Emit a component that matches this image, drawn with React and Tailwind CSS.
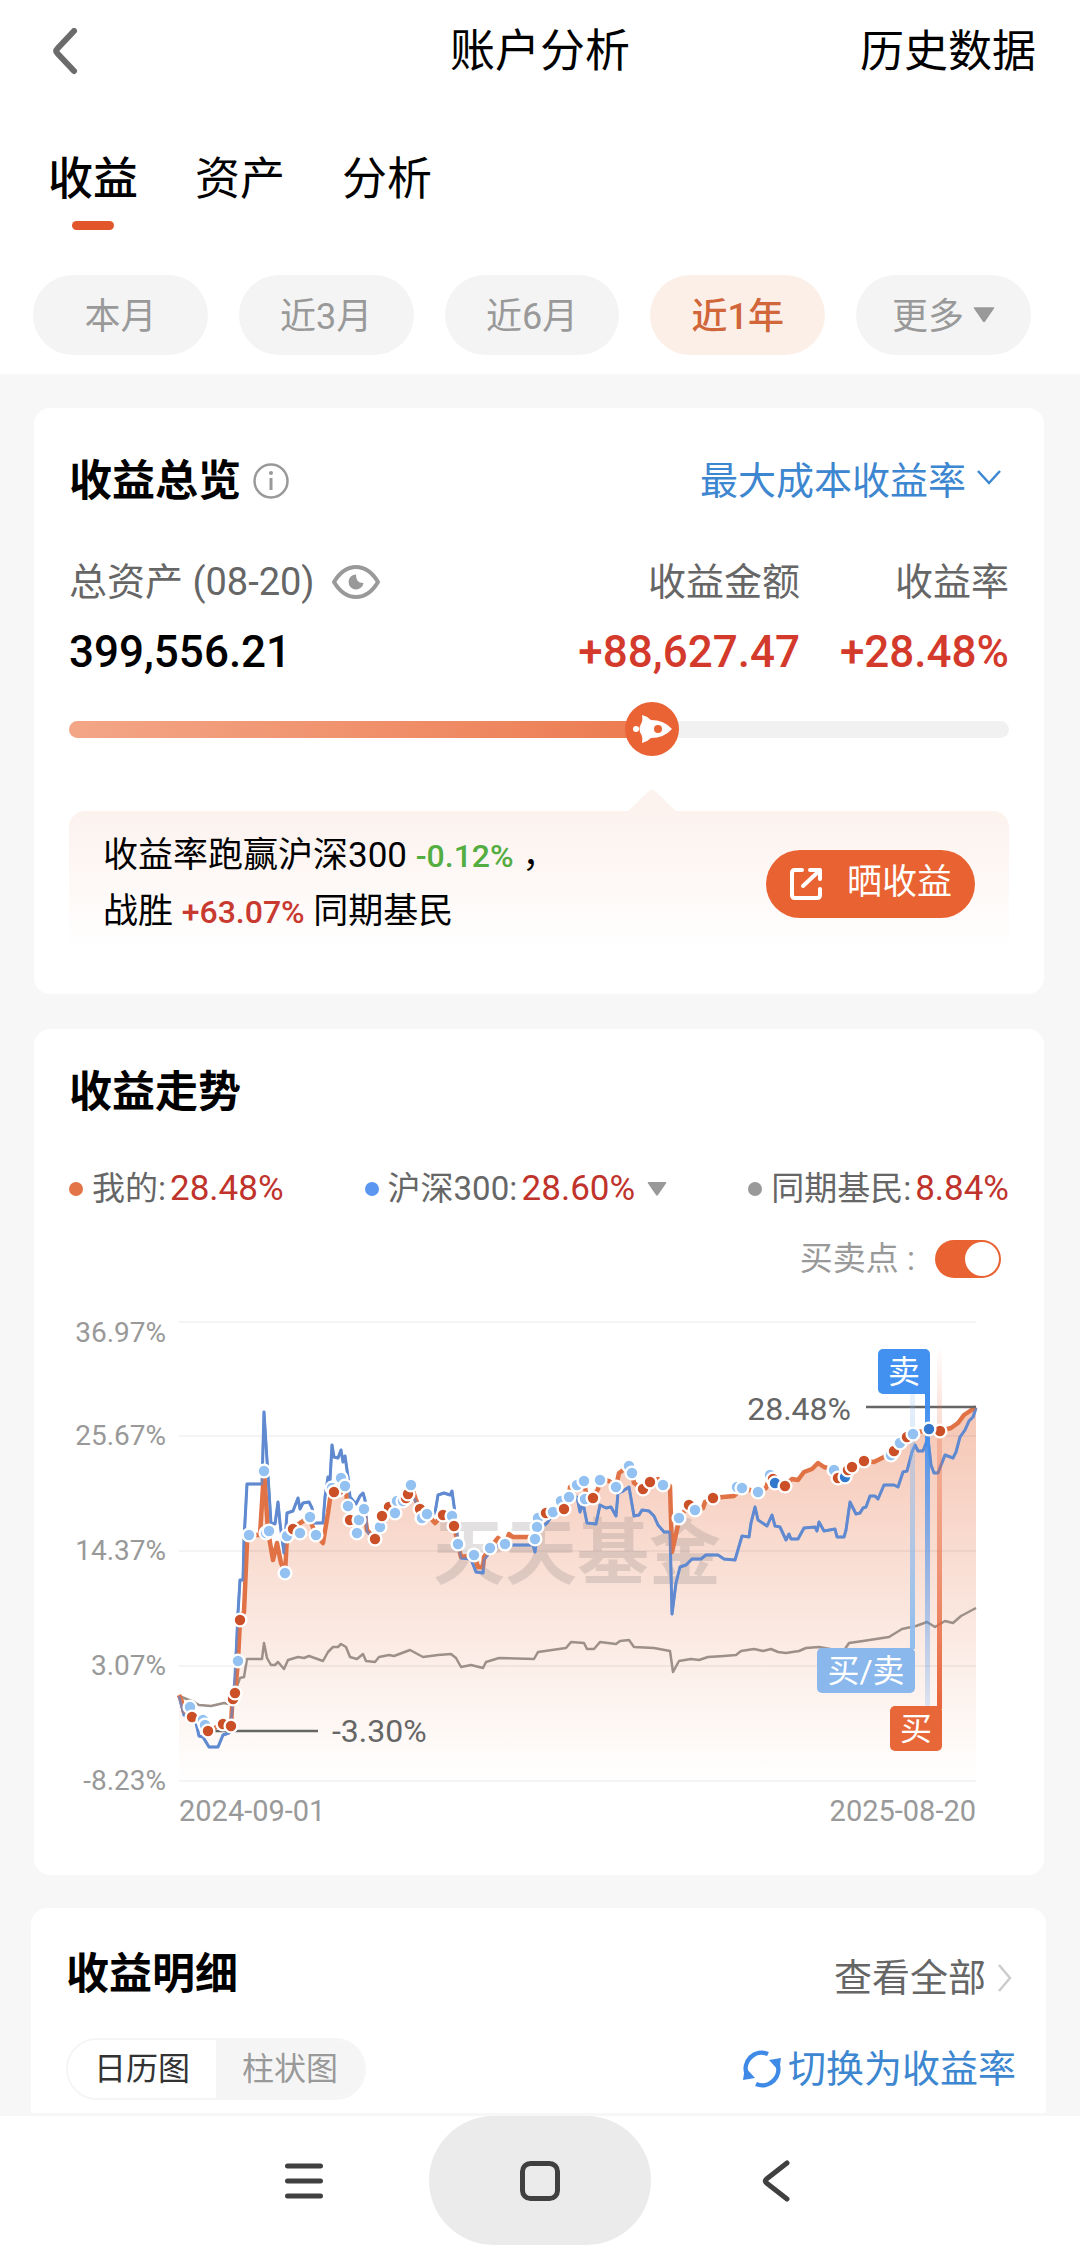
import React, { useState } from 'react';
import clsx from 'clsx';

const TABS = ['收益', '资产', '分析'];
const RANGES = ['本月', '近3月', '近6月', '近1年'];

const MINE =
  '178,1695 181,1702 183,1712 189,1707 191,1717 200,1723 207,1731 222,1724 230,1726 231,1707 234,1693 237,1661 239,1620 243,1612 246,1543 248,1535 259,1535 263,1471 267,1531 272,1560 276,1543 280,1563 284,1573 286,1537 292,1528 299,1523 309,1517 311,1525 315,1535 322,1543 327,1513 330,1492 336,1492 340,1478 344,1486 347,1506 349,1520 356,1533 358,1520 363,1509 366,1530 374,1539 379,1527 381,1516 388,1507 396,1501 405,1497 410,1485 415,1500 419,1509 426,1514 434,1523 442,1515 451,1516 453,1526 457,1544 460,1557 473,1555 477,1567 482,1567 483,1557 489,1548 497,1538 504,1544 508,1534 512,1537 530,1537 534,1539 536,1527 539,1518 545,1513 552,1512 560,1501 568,1497 569,1487 576,1485 583,1481 586,1499 592,1498 597,1489 599,1480 608,1481 615,1487 618,1473 628,1466 631,1473 633,1483 642,1489 649,1482 657,1479 662,1485 669,1486 671,1552 677,1525 678,1518 688,1505 694,1510 702,1508 704,1502 712,1498 722,1497 733,1496 741,1488 757,1492 765,1488 769,1476 774,1483 784,1486 791,1479 797,1480 803,1472 811,1469 817,1463 823,1467 833,1470 837,1478 844,1477 851,1467 863,1461 873,1462 883,1457 893,1451 899,1443 906,1437 912,1434 928,1429 939,1431 950,1428 957,1423 963,1415 969,1411 975,1407';

const INDEX =
  '178,1696 183,1715 195,1723 198,1736 202,1737 208,1747 217,1747 222,1735 228,1733 231,1713 234,1677 237,1613 239,1580 242,1580 243,1540 246,1484 261,1484 263,1412 266,1460 268,1491 270,1523 274,1524 277,1502 279,1523 283,1553 286,1513 292,1511 297,1498 299,1509 302,1503 308,1502 311,1508 313,1523 322,1523 324,1497 327,1477 329,1480 331,1445 333,1457 337,1458 340,1450 342,1462 344,1456 347,1477 349,1497 355,1504 359,1496 362,1493 364,1500 366,1531 374,1541 384,1520 395,1510 410,1492 420,1512 430,1516 434,1513 437,1495 443,1493 449,1495 451,1491 454,1513 457,1544 460,1558 470,1559 475,1572 482,1573 483,1560 488,1553 498,1545 532,1545 534,1552 537,1530 546,1523 553,1513 567,1502 576,1497 579,1512 582,1503 586,1523 595,1524 599,1505 605,1508 610,1507 615,1516 617,1493 622,1491 628,1487 633,1516 638,1515 641,1510 648,1511 653,1516 657,1525 663,1532 669,1532 671,1614 675,1583 679,1567 685,1565 691,1559 700,1559 705,1555 717,1555 723,1559 734,1560 741,1536 748,1537 750,1523 754,1507 757,1520 766,1526 771,1515 774,1526 779,1527 785,1540 788,1534 790,1539 797,1539 803,1528 814,1527 816,1531 818,1522 823,1531 834,1529 836,1537 843,1537 845,1530 849,1502 855,1514 859,1513 862,1508 865,1507 869,1496 874,1496 877,1499 883,1485 893,1485 897,1487 902,1472 906,1471 911,1452 914,1445 917,1451 922,1451 927,1438 930,1465 933,1473 937,1473 944,1455 952,1458 955,1452 959,1437 964,1430 968,1421 972,1417 975,1408';

const PEERS =
  '178,1696 193,1702 198,1705 210,1706 223,1703 228,1704 232,1697 239,1678 243,1677 246,1659 261,1659 263,1643 266,1658 270,1665 274,1665 277,1662 283,1669 287,1660 297,1657 303,1658 308,1656 322,1661 327,1652 332,1647 337,1647 340,1644 345,1647 349,1657 356,1659 362,1654 365,1661 374,1662 378,1657 388,1655 393,1656 409,1650 422,1657 437,1655 450,1654 455,1658 460,1667 470,1665 482,1668 485,1662 498,1658 533,1659 537,1652 565,1648 570,1642 583,1643 586,1649 593,1649 599,1642 615,1644 619,1641 628,1640 633,1647 653,1648 669,1651 672,1672 678,1661 690,1659 698,1660 707,1657 723,1656 735,1655 740,1651 753,1649 762,1651 770,1649 777,1652 785,1653 798,1651 805,1648 818,1647 840,1651 844,1649 848,1643 862,1641 875,1639 888,1637 901,1629 915,1626 926,1622 934,1627 944,1621 952,1623 960,1616 975,1608';

const DOT_COLORS = { s: '#92c1f2', b: '#cb4f27', m: '#3278cf' };

// s = buy and sell on the same day, b = buy, m = sell
const DOTS = [
  ['s', 189, 1707], ['b', 191, 1717], ['s', 202, 1720], ['s', 204, 1725], ['b', 207, 1731], ['b', 222, 1724],
  ['b', 230, 1726], ['b', 232, 1699], ['b', 234, 1693], ['s', 237, 1661], ['b', 239, 1620], ['s', 248, 1535],
  ['s', 263, 1471], ['s', 265, 1533], ['s', 268, 1531], ['s', 284, 1573], ['s', 286, 1536], ['b', 292, 1529],
  ['s', 299, 1533], ['s', 309, 1517], ['s', 315, 1535], ['s', 331, 1488], ['b', 338, 1490], ['b', 333, 1492],
  ['s', 340, 1478], ['s', 344, 1486], ['b', 349, 1520], ['s', 347, 1506], ['s', 356, 1533], ['s', 358, 1520],
  ['s', 363, 1509], ['b', 374, 1539], ['b', 388, 1507], ['s', 379, 1527], ['b', 381, 1516], ['s', 396, 1501],
  ['s', 394, 1513], ['s', 402, 1501], ['b', 405, 1498], ['b', 407, 1494], ['s', 410, 1485], ['b', 419, 1509],
  ['s', 421, 1518], ['s', 426, 1514], ['b', 442, 1515], ['s', 451, 1516], ['b', 453, 1526], ['s', 457, 1544],
  ['s', 473, 1555], ['s', 489, 1548], ['s', 504, 1544], ['s', 537, 1518], ['s', 536, 1527], ['s', 534, 1539],
  ['b', 545, 1513], ['s', 552, 1512], ['s', 560, 1501], ['b', 563, 1509], ['s', 568, 1497], ['s', 576, 1485],
  ['s', 583, 1481], ['s', 584, 1499], ['b', 592, 1498], ['s', 599, 1480], ['s', 615, 1487], ['s', 628, 1466],
  ['s', 631, 1473], ['b', 642, 1489], ['b', 649, 1482], ['s', 662, 1485], ['s', 678, 1518], ['b', 688, 1505],
  ['s', 694, 1510], ['b', 712, 1498], ['s', 736, 1487], ['s', 741, 1488], ['s', 757, 1492], ['s', 769, 1475],
  ['b', 772, 1479], ['m', 774, 1483], ['b', 784, 1486], ['s', 833, 1470], ['b', 837, 1478], ['m', 844, 1477],
  ['b', 847, 1470], ['b', 851, 1467], ['b', 863, 1461], ['s', 890, 1455], ['b', 893, 1451], ['s', 899, 1443],
  ['b', 906, 1437], ['s', 912, 1434], ['b', 939, 1431], ['m', 928, 1429],
];

const GRID = [
  { y: 1322, label: '36.97%', labelY: 1342 },
  { y: 1436, label: '25.67%', labelY: 1445 },
  { y: 1551, label: '14.37%', labelY: 1560 },
  { y: 1666, label: '3.07%', labelY: 1675 },
  { y: 1781, label: '-8.23%', labelY: 1790 },
];

function Triangle({ className }) {
  return (
    <svg viewBox="0 0 20 14" className={className} fill="#999" aria-hidden="true">
      <path d="M1.500 0h17q1.500 0 .6 1.200L11 13q-1 1.400-2 0L.9 1.200Q0 0 1.500 0z" />
    </svg>
  );
}

function Flag({ x, y, width, color, children }) {
  return (
    <g>
      <rect x={x} y={y} width={width} height="45" rx="5" fill={color} />
      <text x={x + width / 2} y={y + 34} textAnchor="middle" fontSize="32" fill="#fff">
        {children}
      </text>
    </g>
  );
}

function TrendChart({ showTrades }) {
  return (
    <svg viewBox="68 1310 940 520" className="mt-[31px] block w-full" role="img" aria-label="收益走势">
      <defs>
        <linearGradient id="area" gradientUnits="userSpaceOnUse" x1="0" y1="1407" x2="0" y2="1781">
          <stop offset="0" stopColor="#f5c6b4" />
          <stop offset="0.4" stopColor="#f9ddd2" />
          <stop offset="0.7" stopColor="#fcefe9" />
          <stop offset="1" stopColor="#fff" />
        </linearGradient>
        <linearGradient id="barBoth" gradientUnits="userSpaceOnUse" x1="0" y1="1385" x2="0" y2="1648">
          <stop offset="0" stopColor="#87b7ec" stopOpacity="0.15" />
          <stop offset="1" stopColor="#8fbdee" />
        </linearGradient>
        <linearGradient id="barSell" gradientUnits="userSpaceOnUse" x1="0" y1="1394" x2="0" y2="1712">
          <stop offset="0" stopColor="#3f8ef0" />
          <stop offset="1" stopColor="#3f8ef0" stopOpacity="0.15" />
        </linearGradient>
        <linearGradient id="barBuy" gradientUnits="userSpaceOnUse" x1="0" y1="1345" x2="0" y2="1706">
          <stop offset="0" stopColor="#e8653a" stopOpacity="0" />
          <stop offset="1" stopColor="#e8653a" />
        </linearGradient>
      </defs>

      <polygon points={`178,1781 ${MINE} 975,1781`} fill="url(#area)" />
      {GRID.map((row) => (
        <g key={row.label}>
          <line x1="178" x2="975" y1={row.y} y2={row.y} stroke="#000" strokeOpacity="0.045" strokeWidth="2" />
          <text x="165" y={row.labelY} textAnchor="end" fontSize="28" fill="#999">
            {row.label}
          </text>
        </g>
      ))}
      <text x="432" y="1578" fontSize="72" fontWeight="700" fill="#8a8583" fillOpacity="0.25">
        天天基金
      </text>

      <g fill="none" strokeLinejoin="round">
        <polyline points={PEERS} stroke="#9c9089" strokeWidth="2.500" />
        <polyline points={INDEX} stroke="#5c8ed8" strokeWidth="3" />
        <polyline points={MINE} stroke="#e07246" strokeWidth="4.500" />
        <polyline points={INDEX} stroke="#6287cc" strokeOpacity="0.7" strokeWidth="2.500" />
      </g>

      <g stroke="#666" strokeWidth="2.500">
        <line x1="207" x2="317" y1="1731" y2="1731" />
        <line x1="865" x2="975" y1="1407" y2="1407" />
      </g>
      <text x="331" y="1742" fontSize="32" fill="#666">-3.30%</text>
      <text x="850" y="1420" textAnchor="end" fontSize="32" fill="#666">28.48%</text>

      {showTrades && (
        <g>
          <rect x="909" y="1385" width="5" height="264" fill="url(#barBoth)" />
          <rect x="924" y="1390" width="5" height="322" fill="url(#barSell)" />
          <rect x="936" y="1345" width="5" height="364" fill="url(#barBuy)" />
          {DOTS.map(([kind, x, y]) => (
            <circle key={`${x}-${y}`} cx={x} cy={y} r="6.400" fill={DOT_COLORS[kind]} stroke="#fff" strokeWidth="2.400" />
          ))}
          <Flag x={877} y={1349} width={52} color="#4290f0">卖</Flag>
          <Flag x={816} y={1648} width={98} color="#8ab8ec">买/卖</Flag>
          <Flag x={889} y={1706} width={52} color="#e86739">买</Flag>
        </g>
      )}

      <g fontSize="29" fill="#999">
        <text x="178" y="1821">2024-09-01</text>
        <text x="975" y="1821" textAnchor="end">2025-08-20</text>
      </g>
    </svg>
  );
}

function Header({ tab, setTab, range, setRange }) {
  return (
    <header className="bg-white pb-[19px]">
      <div className="grid h-[104px] grid-cols-3 items-center px-11">
        <button aria-label="返回" className="justify-self-start">
          <svg viewBox="-6 0 34 48" className="h-12 w-[34px]" fill="none" stroke="#6b6b6b" strokeWidth="6" strokeLinecap="round" strokeLinejoin="round">
            <path d="M24 3 7.500 20.500Q5 23 7.500 25.500L24 43" />
          </svg>
        </button>
        <h1 className="justify-self-center text-[45px]">账户分析</h1>
        <a href="#history" className="justify-self-end text-[44px]">历史数据</a>
      </div>

      <nav className="mt-[46px] flex gap-[57px] pl-12">
        {TABS.map((name) => (
          <button key={name} onClick={() => setTab(name)} className="flex flex-col items-center gap-[11px]">
            <span className={clsx('text-[45px] leading-[60px]', tab === name && 'font-medium')}>{name}</span>
            <span className={clsx('h-[9px] w-[42px] rounded-full', tab === name && 'bg-[#e1572b]')} />
          </button>
        ))}
      </nav>

      <div className="mt-[45px] flex gap-[31px] pr-[49px] pl-[33px] text-[36px] text-[#999]">
        {RANGES.map((name) => (
          <button
            key={name}
            onClick={() => setRange(name)}
            className={clsx(
              'h-20 flex-1 rounded-full pt-1',
              range === name ? 'bg-[#fcefe8] font-medium text-[#d0663a]' : 'bg-[#f4f4f4]'
            )}
          >
            {name}
          </button>
        ))}
        <label className="flex h-20 flex-1 items-center justify-center gap-2 rounded-full bg-[#f4f4f4]">
          <select aria-label="更多" className="appearance-none bg-transparent pt-1">
            <option>更多</option>
          </select>
          <Triangle className="h-4 w-[22px]" />
        </label>
      </div>
    </header>
  );
}

function Overview() {
  const progress = 62;
  return (
    <section className="mr-9 ml-[34px] rounded-2xl bg-white px-[35px] pt-[43px] pb-[42px]">
      <div className="flex h-[60px] items-center justify-between">
        <div className="flex items-center gap-3">
          <h2 className="text-[43px] font-bold">收益总览</h2>
          <svg viewBox="0 0 36 36" className="size-9" fill="none" stroke="#999" strokeWidth="2.500">
            <circle cx="18" cy="18" r="16.500" />
            <path d="M18 15v12" strokeWidth="3" />
            <circle cx="18" cy="10" r="2" fill="#999" stroke="none" />
          </svg>
        </div>
        <label className="flex items-center gap-[10px] pr-2 text-[38px] text-[#3d86d0]">
          <select aria-label="收益率类型" className="appearance-none bg-transparent">
            <option>最大成本收益率</option>
          </select>
          <svg viewBox="0 0 24 24" className="size-6" fill="none" stroke="currentColor" strokeWidth="2.500">
            <path d="m1 2 11 12L23 2" />
          </svg>
        </label>
      </div>

      <div className="mt-[46px] flex justify-between">
        <div>
          <div className="flex h-[50px] items-center gap-4 text-[38px] text-[#666]">
            总资产 (08-20)
            <button aria-label="隐藏金额">
              <svg viewBox="0 0 50 36" className="h-9 w-[50px]" fill="none" stroke="#999" strokeWidth="4" strokeLinejoin="round">
                <path d="M3 18Q12 3 25 3t22 15Q38 33 25 33T3 18z" />
                <path d="M25 10.500a7.500 7.500 0 1 0 7.500 8.500q-7.500.5-7.500-8.500z" fill="#999" stroke="none" />
              </svg>
            </button>
          </div>
          <div className="mt-[15px] text-[44px] leading-[60px] font-medium">399,556.21</div>
        </div>
        <div className="flex gap-10 text-right">
          <div>
            <div className="text-[38px] leading-[50px] text-[#666]">收益金额</div>
            <div className="mt-[15px] text-[44px] leading-[60px] font-medium text-[#d43a2c]">+88,627.47</div>
          </div>
          <div>
            <div className="text-[38px] leading-[50px] text-[#666]">收益率</div>
            <div className="mt-[15px] text-[44px] leading-[60px] font-medium text-[#d43a2c]">+28.48%</div>
          </div>
        </div>
      </div>

      <div className="relative mt-5 flex h-[54px] items-center">
        <div className="h-[17px] w-full overflow-hidden rounded-full bg-[#f1f1f1]">
          <div className="h-full bg-linear-to-r from-[#f3a687] to-[#ec7b50]" style={{ width: `${progress}%` }} />
        </div>
        <div className="absolute top-0 -translate-x-1/2" style={{ left: `${progress}%` }}>
          <svg viewBox="0 0 54 54" className="size-[54px]">
            <circle cx="27" cy="27" r="27" fill="#e96334" />
            <path d="M17 13q5 1 9 5 13 0 21 9-8 9-21 9-4 4-9 5 1-6-1-9-3-5 0-10 2-3 1-9z" fill="#fff" />
            <circle cx="11" cy="27" r="3" fill="#fff" />
            <circle cx="33" cy="27" r="4" fill="#e96334" />
          </svg>
        </div>
      </div>

      <div className="relative mt-[55px] flex h-[141px] items-center justify-between rounded-2xl bg-linear-to-b from-[#fcf2ee] to-white px-[34px] pt-1">
        <svg viewBox="0 0 48 22" className="absolute bottom-full h-[22px] w-12 -translate-x-1/2" style={{ left: `${progress}%` }}>
          <path d="M0 22 20 3q4-5 8 0l20 19z" fill="#fcf2ee" />
        </svg>
        <p className="text-[35px] leading-[56px]">
          收益率跑赢沪深300 <span className="text-[32px] font-medium text-[#54ad41]">-0.12%</span> ，<br />
          战胜 <span className="text-[32px] font-medium text-[#c83a30]">+63.07%</span> 同期基民
        </p>
        <button className="flex h-[68px] items-center gap-6 rounded-full bg-[#e96231] px-[23px] text-[35px] text-white">
          <svg viewBox="0 0 34 34" className="size-[34px]" fill="none" stroke="currentColor" strokeWidth="4" strokeLinejoin="round" strokeLinecap="round">
            <path d="M13 3H6Q3 3 3 6v22q0 3 3 3h22q3 0 3-3v-6M14 19 29 5M21 3h10v9" />
          </svg>
          晒收益
        </button>
      </div>
    </section>
  );
}

function Trend() {
  const [showTrades, setShowTrades] = useState(true);
  return (
    <section className="mt-[35px] mr-9 ml-[34px] rounded-2xl bg-white px-[35px] pt-[33px] pb-[45px]">
      <h2 className="text-[43px] leading-[60px] font-bold">收益走势</h2>

      <div className="mt-[42px] flex h-[50px] items-center justify-between text-[33px] text-[#666]">
        <div className="flex items-center gap-1">
          <span className="mr-[5px] size-[14px] rounded-full bg-[#e37447]" />
          我的:<span className="text-[35px] text-[#c0332b]">28.48%</span>
        </div>
        <div className="flex items-center gap-1">
          <span className="mr-[5px] size-[14px] rounded-full bg-[#5b97f0]" />
          <select aria-label="对比指数" className="appearance-none bg-transparent">
            <option>沪深300:</option>
          </select>
          <span className="text-[35px] text-[#c0332b]">28.60%</span>
          <Triangle className="ml-2 h-[14px] w-5" />
        </div>
        <div className="flex items-center gap-1">
          <span className="mr-[5px] size-[14px] rounded-full bg-[#999]" />
          同期基民:<span className="text-[35px] text-[#c0332b]">8.84%</span>
        </div>
      </div>

      <label className="mt-[25px] flex h-10 items-center justify-end gap-5 pr-2 text-[33px] text-[#999]">
        买卖点 :
        <input
          type="checkbox"
          className="peer sr-only"
          checked={showTrades}
          onChange={(e) => setShowTrades(e.target.checked)}
        />
        <span className="flex h-[38px] w-[66px] rounded-full bg-[#ccc] p-[2px] peer-checked:justify-end peer-checked:bg-[#e96231]">
          <span className="size-[34px] rounded-full bg-white" />
        </span>
      </label>

      <TrendChart showTrades={showTrades} />
    </section>
  );
}

function Details() {
  return (
    <section className="mt-[33px] mr-[34px] ml-[31px] rounded-t-2xl bg-white pt-9 pr-[30px] pb-[13px] pl-[35px]">
      <div className="flex items-start justify-between">
        <h2 className="text-[43px] leading-[60px] font-bold">收益明细</h2>
        <a href="#all" className="flex items-center gap-3 pr-1 text-[38px] leading-[68px] text-[#666]">
          查看全部
          <svg viewBox="0 0 14 28" className="h-7 w-[14px]" fill="none" stroke="#ccc" strokeWidth="2.500">
            <path d="m1 1 11 13L1 27" />
          </svg>
        </a>
      </div>
      <div className="mt-[26px] flex h-[62px] items-center justify-between">
        <div className="flex h-full overflow-hidden rounded-full border-2 border-[#f5f5f5] text-[32px]">
          <button className="bg-white px-[26px] text-[#333]">日历图</button>
          <button className="bg-[#f5f5f5] px-[26px] text-[#999]">柱状图</button>
        </div>
        <button className="flex items-center gap-[6px] text-[38px] text-[#3d86d0]">
          <svg viewBox="0 0 40 40" className="size-10" fill="none" stroke="#3f8ae6" strokeWidth="4.500">
            <path d="M5 26A16 16 0 0 1 26 5M35 14A16 16 0 0 1 14 35" />
            <path d="M27 11 39 9l-2 13zM13 29 1 31l2-13z" fill="#3f8ae6" stroke="none" />
          </svg>
          切换为收益率
        </button>
      </div>
    </section>
  );
}

function SystemNav() {
  return (
    <nav className="mt-[3px] flex h-[129px] justify-center bg-white">
      <button aria-label="最近任务" className="flex w-[250px] items-center justify-center">
        <svg viewBox="0 0 40 40" className="size-10" stroke="#404040" strokeWidth="5" strokeLinecap="round">
          <path d="M3.500 5h33M3.500 20h33M3.500 35h33" />
        </svg>
      </button>
      <button aria-label="主屏幕" className="flex w-[222px] items-center justify-center rounded-full bg-[#ebebeb]">
        <svg viewBox="0 0 42 42" className="size-[42px]" fill="none" stroke="#404040" strokeWidth="5">
          <rect x="3.500" y="3.500" width="35" height="35" rx="8" />
        </svg>
      </button>
      <button aria-label="返回上一页" className="flex w-[250px] items-center justify-center">
        <svg viewBox="0 0 30 42" className="h-[42px] w-[30px]" fill="none" stroke="#404040" strokeWidth="5" strokeLinecap="round" strokeLinejoin="round">
          <path d="M26 3 5.500 19Q3 21 5.500 23L26 39" />
        </svg>
      </button>
    </nav>
  );
}

export default function App() {
  const [tab, setTab] = useState('收益');
  const [range, setRange] = useState('近1年');

  return (
    <div className="bg-[#f7f7f7] font-[Roboto,'Noto_Sans_CJK_SC',sans-serif] text-black">
      <Header tab={tab} setTab={setTab} range={range} setRange={setRange} />
      <main className="pt-[34px]">
        <Overview />
        <Trend />
        <Details />
      </main>
      <SystemNav />
    </div>
  );
}
